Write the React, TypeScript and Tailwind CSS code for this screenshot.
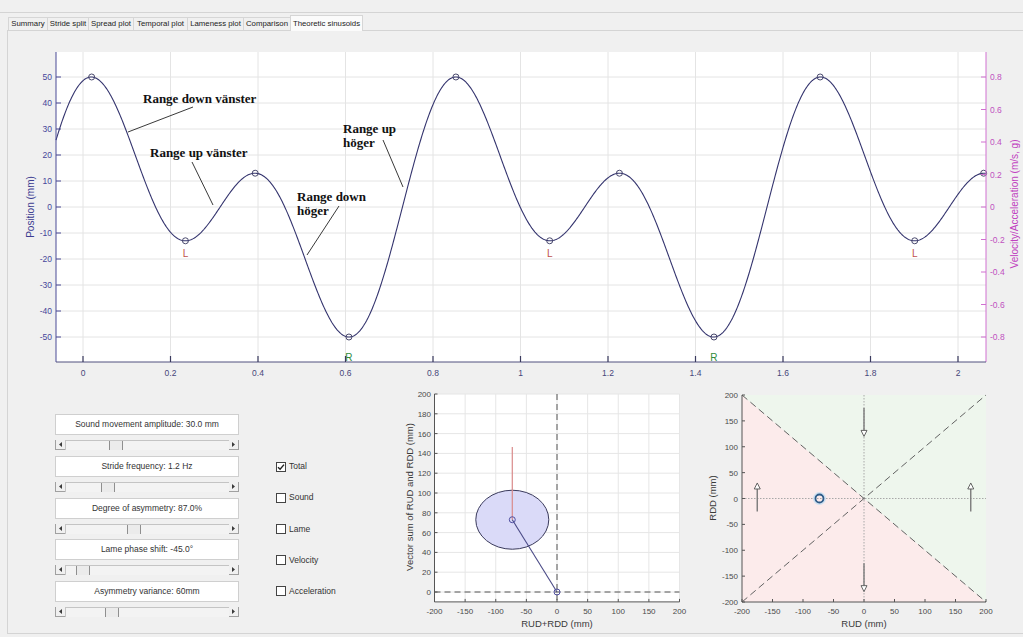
import React from "react";

const SANS = '"Liberation Sans", Arial, sans-serif';
const SERIF = '"Liberation Serif", "Times New Roman", serif';

// main plot, page coordinates
const MX0 = 56;
const MX1 = 986;
const MY0 = 52;
const MY1 = 362;
const tx = (t: number) => 83 + t * 437.5;
const my = (v: number) => 207 - v * 2.6;

const OMEGA = 2 * Math.PI * 1.2;
const position = (t: number) => {
  const th = OMEGA * (t - 0.001);
  return 30 * Math.cos(2 * th) + 26.5 * Math.cos(th - Math.PI / 4);
};

type Extremum = { t: number; v: number; kind: "max" | "min" };

function buildCurve() {
  const t0 = (MX0 - 83) / 437.5;
  const t1 = (MX1 - 83) / 437.5;
  const n = 1200;
  const ts: number[] = [];
  const vs: number[] = [];
  for (let i = 0; i <= n; i++) {
    const t = t0 + ((t1 - t0) * i) / n;
    ts.push(t);
    vs.push(position(t));
  }
  const d = ts.map((t, i) => `${i === 0 ? "M" : "L"}${tx(t).toFixed(2)} ${my(vs[i]).toFixed(2)}`).join(" ");
  const extrema: Extremum[] = [];
  for (let i = 1; i < n; i++) {
    if (vs[i] > vs[i - 1] && vs[i] >= vs[i + 1]) extrema.push({ t: ts[i], v: vs[i], kind: "max" });
    if (vs[i] < vs[i - 1] && vs[i] <= vs[i + 1]) extrema.push({ t: ts[i], v: vs[i], kind: "min" });
  }
  return { d, extrema };
}

const curve = buildCurve();

const xTicks = [0, 0.2, 0.4, 0.6, 0.8, 1, 1.2, 1.4, 1.6, 1.8, 2];
const leftTicks = [50, 40, 30, 20, 10, 0, -10, -20, -30, -40, -50];
const rightTicks = [0.8, 0.6, 0.4, 0.2, 0, -0.2, -0.4, -0.6, -0.8];

function MainPlot() {
  return (
    <svg width="1015" height="355" viewBox="8 31 1015 355" className="block" style={{ fontFamily: SANS }}>
      <rect x={MX0} y={MY0} width={MX1 - MX0} height={MY1 - MY0} fill="#ffffff" />
      {xTicks.map((t) => (
        <line key={`gx${t}`} x1={tx(t)} y1={MY0} x2={tx(t)} y2={MY1} stroke="#e4e4e4" strokeWidth="1" />
      ))}
      {leftTicks.map((v) => (
        <line key={`gy${v}`} x1={MX0} y1={my(v)} x2={MX1} y2={my(v)} stroke="#e4e4e4" strokeWidth="1" />
      ))}

      <path d={curve.d} fill="none" stroke="#34346e" strokeWidth="1.1" />
      {curve.extrema.map((e, i) => (
        <g key={`m${i}`}>
          <circle cx={tx(e.t)} cy={my(e.v)} r="3" fill="none" stroke="#4a4a6e" strokeWidth="1" />
          {e.kind === "min" && e.v > -30 ? (
            <text x={tx(e.t)} y={my(e.v) + 16} fontSize="10" fill="#c0504d" textAnchor="middle">
              L
            </text>
          ) : null}
          {e.kind === "min" && e.v <= -30 ? (
            <text x={tx(e.t)} y={my(e.v) + 24} fontSize="10" fill="#2e8b3a" textAnchor="middle">
              R
            </text>
          ) : null}
        </g>
      ))}

      {/* left axis */}
      <line x1={MX0} y1={MY0} x2={MX0} y2={MY1} stroke="#4a4a96" strokeWidth="1" />
      {leftTicks.map((v) => (
        <g key={`lt${v}`}>
          <line x1={MX0} y1={my(v)} x2={MX0 + 5} y2={my(v)} stroke="#4a4a96" />
          <text x={52} y={my(v) + 3} fontSize="8.5" fill="#46469a" textAnchor="end">
            {v}
          </text>
        </g>
      ))}
      <text transform="translate(34 207) rotate(-90)" fontSize="10" fill="#3c3c90" textAnchor="middle">
        Position (mm)
      </text>

      {/* right axis */}
      <line x1={MX1} y1={MY0} x2={MX1} y2={MY1} stroke="#d070d0" strokeWidth="1" />
      {rightTicks.map((v) => (
        <g key={`rt${v}`}>
          <line x1={MX1 - 5} y1={207 - (v / 0.8) * 130} x2={MX1} y2={207 - (v / 0.8) * 130} stroke="#d070d0" />
          <text x={990} y={207 - (v / 0.8) * 130 + 3} fontSize="8.5" fill="#c050c0">
            {v === 0 ? "0" : v.toFixed(1)}
          </text>
        </g>
      ))}
      <text transform="translate(1018 204) rotate(-90)" fontSize="10" fill="#c040c0" textAnchor="middle">
        Velocity/Acceleration (m/s, g)
      </text>

      {/* bottom axis */}
      <line x1={MX0} y1={MY1} x2={MX1} y2={MY1} stroke="#50507e" strokeWidth="1" />
      {xTicks.map((t) => (
        <g key={`xt${t}`}>
          <line x1={tx(t)} y1={MY1 - 6} x2={tx(t)} y2={MY1} stroke="#3a3a5e" strokeWidth="1.2" />
          <text x={tx(t)} y={376} fontSize="8.5" fill="#46467a" textAnchor="middle">
            {String(t)}
          </text>
        </g>
      ))}

      {/* annotations */}
      <g style={{ fontFamily: SERIF }} fontWeight="bold" fontSize="13" fill="#111111">
        <text x={143} y={103}>Range down vänster</text>
        <text x={150} y={157}>Range up vänster</text>
        <text x={343} y={133}>Range up</text>
        <text x={343} y={147}>höger</text>
        <text x={297} y={201}>Range down</text>
        <text x={297} y={215}>höger</text>
      </g>
      <g stroke="#222222" strokeWidth="0.9">
        <line x1={193} y1={107} x2={128} y2={132} />
        <line x1={192} y1={162} x2={213} y2={205} />
        <line x1={383} y1={140} x2={403} y2={187} />
        <line x1={339} y1={206} x2={307} y2={255} />
      </g>
    </svg>
  );
}

// vector plot
const vx = (u: number) => 557 + u * 0.6125;
const vy = (v: number) => 592 - v * 0.99;

function VectorPlot() {
  const xs = [-200, -150, -100, -50, 0, 50, 100, 150, 200];
  const ys = [0, 20, 40, 60, 80, 100, 120, 140, 160, 180, 200];
  const cx = vx(-73);
  const cy = vy(73);
  return (
    <svg width="305" height="247" viewBox="395 386 305 247" className="block" style={{ fontFamily: SANS }}>
      <rect x={vx(-200)} y={vy(200)} width={vx(200) - vx(-200)} height={vy(-10) - vy(200)} fill="#ffffff" />
      {xs.map((u) => (
        <line key={`g${u}`} x1={vx(u)} y1={vy(200)} x2={vx(u)} y2={vy(-10)} stroke="#e6e6e6" />
      ))}
      {ys.map((v) => (
        <line key={`h${v}`} x1={vx(-200)} y1={vy(v)} x2={vx(200)} y2={vy(v)} stroke="#e6e6e6" />
      ))}
      <line x1={vx(0)} y1={vy(200)} x2={vx(0)} y2={vy(-10)} stroke="#555555" strokeDasharray="6 4" />
      <line x1={vx(-200)} y1={vy(0)} x2={vx(200)} y2={vy(0)} stroke="#555555" strokeDasharray="6 4" />
      <ellipse cx={cx} cy={cy} rx="36.5" ry="29.5" fill="#dadaf8" stroke="#3a3a5c" strokeWidth="1" />
      <line x1={cx} y1={447} x2={cx} y2={cy} stroke="#d98a8a" strokeWidth="1.2" />
      <line x1={cx} y1={cy} x2={vx(0)} y2={vy(0)} stroke="#4a4a86" strokeWidth="1.1" />
      <circle cx={cx} cy={cy} r="3" fill="none" stroke="#5050a0" />
      <circle cx={vx(0)} cy={vy(0)} r="3" fill="none" stroke="#5050a0" />
      <line x1={vx(-200)} y1={vy(200)} x2={vx(-200)} y2={vy(-10)} stroke="#555555" />
      <line x1={vx(-200)} y1={vy(-10)} x2={vx(200)} y2={vy(-10)} stroke="#555555" />
      {ys.map((v) => (
        <g key={`yt${v}`}>
          <line x1={vx(-200)} y1={vy(v)} x2={vx(-200) + 3} y2={vy(v)} stroke="#555555" />
          <text x={431} y={vy(v) + 3} fontSize="8" fill="#4a4a4a" textAnchor="end">
            {v}
          </text>
        </g>
      ))}
      {xs.map((u) => (
        <g key={`xt${u}`}>
          <line x1={vx(u)} y1={vy(-10) - 3} x2={vx(u)} y2={vy(-10)} stroke="#555555" />
          <text x={vx(u)} y={614} fontSize="8" fill="#4a4a4a" textAnchor="middle">
            {u}
          </text>
        </g>
      ))}
      <text x={557} y={627} fontSize="9.5" fill="#3a3a3a" textAnchor="middle">
        RUD+RDD (mm)
      </text>
      <text transform="translate(413 497) rotate(-90)" fontSize="9.5" fill="#3a3a3a" textAnchor="middle">
        Vector sum of RUD and RDD (mm)
      </text>
    </svg>
  );
}

// quadrant plot
const qx = (u: number) => 864 + u * 0.61;
const qy = (v: number) => 498.5 - v * 0.5175;

function Arrow({ x, from, to }: { x: number; from: number; to: number }) {
  const dir = to > from ? 1 : -1; // +1 = pointing up
  const tipY = qy(to);
  const baseY = tipY + dir * 6;
  return (
    <g>
      <line x1={qx(x)} y1={qy(from)} x2={qx(x)} y2={baseY} stroke="#7a7a7a" strokeWidth="1.4" />
      <path d={`M${qx(x) - 3} ${baseY} L${qx(x) + 3} ${baseY} L${qx(x)} ${tipY} Z`} fill="#ffffff" stroke="#555555" strokeWidth="0.9" />
    </g>
  );
}

function QuadrantPlot() {
  const ticks = [-200, -150, -100, -50, 0, 50, 100, 150, 200];
  return (
    <svg width="323" height="247" viewBox="700 386 323 247" className="block" style={{ fontFamily: SANS }}>
      <path d={`M${qx(-200)} ${qy(200)} L${qx(200)} ${qy(-200)} L${qx(-200)} ${qy(-200)} Z`} fill="#fcebeb" />
      <path d={`M${qx(-200)} ${qy(200)} L${qx(200)} ${qy(200)} L${qx(200)} ${qy(-200)} Z`} fill="#eef6ed" />
      <line x1={qx(-200)} y1={qy(0)} x2={qx(200)} y2={qy(0)} stroke="#a8a8a8" strokeDasharray="1.5 1.5" />
      <line x1={qx(0)} y1={qy(200)} x2={qx(0)} y2={qy(-200)} stroke="#a8a8a8" strokeDasharray="1.5 1.5" />
      <line x1={qx(-200)} y1={qy(200)} x2={qx(200)} y2={qy(-200)} stroke="#626262" strokeDasharray="7 4" />
      <line x1={qx(-200)} y1={qy(-200)} x2={qx(200)} y2={qy(200)} stroke="#626262" strokeDasharray="7 4" />
      <Arrow x={0} from={175} to={120} />
      <Arrow x={0} from={-125} to={-180} />
      <Arrow x={-175} from={-25} to={30} />
      <Arrow x={175} from={-25} to={30} />
      <circle cx={qx(-73)} cy={qy(0)} r="5.5" fill="none" stroke="#cfe0f0" strokeWidth="2" />
      <circle cx={qx(-73)} cy={qy(0)} r="4" fill="none" stroke="#2d5b88" strokeWidth="1.8" />
      <line x1={qx(-200)} y1={qy(200)} x2={qx(-200)} y2={qy(-200)} stroke="#555555" />
      <line x1={qx(-200)} y1={qy(-200)} x2={qx(200)} y2={qy(-200)} stroke="#555555" />
      {ticks.map((v) => (
        <g key={`y${v}`}>
          <line x1={qx(-200)} y1={qy(v)} x2={qx(-200) + 3} y2={qy(v)} stroke="#555555" />
          <text x={738} y={qy(v) + 3} fontSize="8" fill="#4a4a4a" textAnchor="end">
            {v}
          </text>
        </g>
      ))}
      {ticks.map((u) => (
        <g key={`x${u}`}>
          <line x1={qx(u)} y1={qy(-200) - 3} x2={qx(u)} y2={qy(-200)} stroke="#555555" />
          <text x={qx(u)} y={614} fontSize="8" fill="#4a4a4a" textAnchor="middle">
            {u}
          </text>
        </g>
      ))}
      <text x={864} y={627} fontSize="9.5" fill="#3a3a3a" textAnchor="middle">
        RUD (mm)
      </text>
      <text transform="translate(716 498) rotate(-90)" fontSize="9.5" fill="#3a3a3a" textAnchor="middle">
        RDD (mm)
      </text>
    </svg>
  );
}

function Slider({ thumbLeft }: { thumbLeft: number }) {
  return (
    <div className="flex h-[10px] w-[184px]">
      <div className="flex h-full w-[10px] items-center justify-center border-b border-l border-[#a0a0a0]">
        <svg width="3" height="5" viewBox="0 0 3 5">
          <path d="M3 0 L0 2.5 L3 5 Z" fill="#3a3a3a" />
        </svg>
      </div>
      <div className="flex h-full flex-1 border-l border-t border-[#c4c4c4] bg-[#f3f3f3]">
        <div className="h-full" style={{ width: thumbLeft }} />
        <div className="h-full w-[14px] border-r border-l border-[#8f8f8f] bg-[#ebebeb]" />
      </div>
      <div className="flex h-full w-[10px] items-center justify-center border-b border-r border-[#a0a0a0]">
        <svg width="3" height="5" viewBox="0 0 3 5">
          <path d="M0 0 L3 2.5 L0 5 Z" fill="#3a3a3a" />
        </svg>
      </div>
    </div>
  );
}

const controls = [
  { label: "Sound movement amplitude: 30.0 mm", thumb: 43 },
  { label: "Stride frequency: 1.2 Hz", thumb: 35 },
  { label: "Degree of asymmetry: 87.0%", thumb: 61 },
  { label: "Lame phase shift: -45.0°", thumb: 10 },
  { label: "Asymmetry variance: 60mm", thumb: 39 },
];

const toggles = [
  { label: "Total", checked: true },
  { label: "Sound", checked: false },
  { label: "Lame", checked: false },
  { label: "Velocity", checked: false },
  { label: "Acceleration", checked: false },
];

const tabs = [
  { label: "Summary", w: 40 },
  { label: "Stride split", w: 42 },
  { label: "Spread plot", w: 46 },
  { label: "Temporal plot", w: 55 },
  { label: "Lameness plot", w: 57 },
  { label: "Comparison", w: 48 },
];

export default function App() {
  return (
    <div className="h-[637px] w-[1023px] overflow-hidden bg-[#f0f0f0] text-[#222]" style={{ fontFamily: SANS }}>
      <div className="h-[13px] border-b border-[#d4d4d4]" />
      <div className="flex h-[17px] items-end pl-[8px]">
        {tabs.map((tab) => (
          <div
            key={tab.label}
            className="-mr-px flex h-[13px] items-center justify-center border border-b-0 border-[#d6d6d6] bg-[#f0f0f0] text-[7.8px] leading-none text-[#222]"
            style={{ width: tab.w }}
          >
            {tab.label}
          </div>
        ))}
        <div className="relative top-px flex h-[16px] w-[73px] items-center justify-center border border-b-0 border-[#d6d6d6] bg-[#fbfbfb] text-[7.8px] leading-none text-[#222]">
          Theoretic sinusoids
        </div>
      </div>
      <div className="ml-[7px] h-[604px] border-y border-l border-[#d4d4d4]">
        <MainPlot />
        <div className="flex h-[247px]">
          <div className="ml-[47px] flex w-[184px] flex-col gap-[5.75px] pt-[28px]">
            {controls.map((c) => (
              <div key={c.label} className="flex flex-col">
                <div className="flex h-[21px] items-center justify-center border border-[#cfcfcf] bg-white text-[8.5px] text-[#333]">
                  {c.label}
                </div>
                <div className="mt-[5px]">
                  <Slider thumbLeft={c.thumb} />
                </div>
              </div>
            ))}
          </div>
          <div className="ml-[37px] flex w-[119px] flex-col pt-[65px]">
            {toggles.map((t) => (
              <div key={t.label} className="flex h-[31.2px] items-center gap-[3px] text-[8.5px] text-[#333]">
                <div className="flex h-[10px] w-[10px] items-center justify-center border border-[#444] bg-white">
                  {t.checked ? (
                    <svg width="8" height="8" viewBox="0 0 8 8">
                      <path d="M1 4.2 L3.1 6.3 L7 1.6" fill="none" stroke="#222" strokeWidth="1.4" />
                    </svg>
                  ) : null}
                </div>
                <span>{t.label}</span>
              </div>
            ))}
          </div>
          <VectorPlot />
          <QuadrantPlot />
        </div>
      </div>
    </div>
  );
}
